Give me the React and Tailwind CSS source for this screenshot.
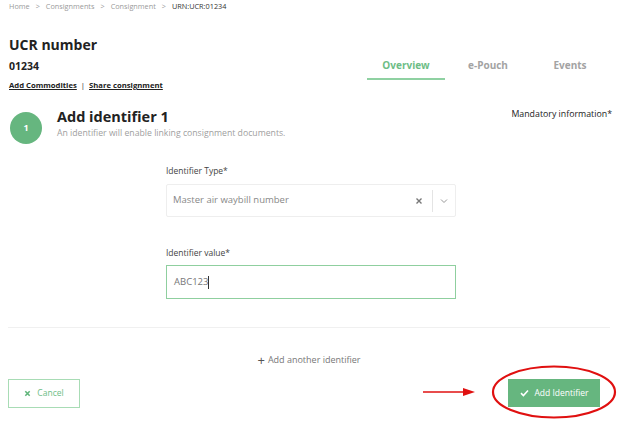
import React from "react";

export default function App() {
  return (
    <div className="relative w-[618px] h-[429px] overflow-hidden bg-white text-[#222] font-['Open_Sans','Noto_Sans',sans-serif]">
      {/* breadcrumb */}
      <div className="flex items-center gap-[6px] pl-[9px] pt-[1px] h-[11px] text-[7.3px] leading-[9px] text-[#9a9a9a]">
        <span>Home</span>
        <span>&gt;</span>
        <span>Consignments</span>
        <span>&gt;</span>
        <span>Consignment</span>
        <span>&gt;</span>
        <span className="text-[#333]">URN:UCR:01234</span>
      </div>

      {/* header */}
      <div className="flex justify-between pl-[9px] pr-[7px]">
        <div className="pt-[25px]">
          <div className="text-[14px] leading-[18px] font-bold">UCR number</div>
          <div className="mt-[5px] text-[10.5px] leading-[14px] font-bold">01234</div>
          <div className="mt-[7px] flex items-center gap-[4px] text-[7.7px] leading-[10px] font-bold">
            <span className="underline">Add Commodities</span>
            <span className="font-normal">|</span>
            <span className="underline">Share consignment</span>
          </div>
        </div>
        <div className="flex pt-[47px]">
          <div className="w-[82px] flex flex-col items-center">
            <span className="text-[10px] leading-[14px] font-bold text-[#6dbd86]">Overview</span>
            <span className="mt-[6px] h-[2px] w-[78px] bg-[#8fd1a2]"></span>
          </div>
          <div className="w-[82px] flex justify-center">
            <span className="text-[10px] leading-[14px] font-bold text-[#a3a3a3]">e-Pouch</span>
          </div>
          <div className="w-[82px] flex justify-center">
            <span className="text-[10px] leading-[14px] font-bold text-[#a3a3a3]">Events</span>
          </div>
        </div>
      </div>

      {/* step */}
      <div className="flex justify-between pl-[10px] pr-[6px] mt-[17px]">
        <div className="flex">
          <div className="mt-[5px] w-[32px] h-[32px] rounded-full bg-[#66b67f] flex items-center justify-center text-white text-[9px] font-bold">1</div>
          <div className="ml-[15px]">
            <div className="text-[14.5px] leading-[19px] font-bold text-[#222]">Add identifier 1</div>
            <div className="mt-[2px] text-[8.7px] leading-[11px] text-[#a0a0a0]">An identifier will enable linking consignment documents.</div>
          </div>
        </div>
        <div className="mt-[2px] text-[8.8px] leading-[11px] text-[#222]">Mandatory information*</div>
      </div>

      {/* form */}
      <div className="ml-[166px] w-[290px] mt-[21px]">
        <div className="text-[8.5px] leading-[11px] text-[#444]">Identifier Type*</div>
        <div className="mt-[8px] h-[33px] border border-[#eeeeee] rounded-[2px] flex items-center">
          <span className="flex-1 pl-[6px] text-[9.5px] text-[#888]">Master air waybill number</span>
          <svg width="8" height="8" viewBox="0 0 8 8" className="mr-[9px]">
            <path d="M1.5 1.5 L6.5 6.5 M6.5 1.5 L1.5 6.5" stroke="#777" strokeWidth="1.4" />
          </svg>
          <span className="w-px h-[22px] bg-[#e4e4e4]"></span>
          <svg width="8" height="6" viewBox="0 0 8 6" className="mx-[7px]">
            <path d="M1 1.5 L4 4.5 L7 1.5" stroke="#999" strokeWidth="1" fill="none" />
          </svg>
        </div>
        <div className="mt-[30px] text-[8.5px] leading-[11px] text-[#444]">Identifier value*</div>
        <div className="mt-[7px] h-[34px] border-[1.5px] border-[#8fcf9f] flex items-center pl-[7px] text-[9.5px] text-[#777]">
          ABC123<span className="w-px h-[13px] bg-[#333]"></span>
        </div>
      </div>

      {/* divider */}
      <div className="mx-[8px] mt-[28px] h-px bg-[#f0f0f0]"></div>

      <div className="mt-[26px] flex justify-center items-center text-[9px] leading-[12px] text-[#777]">
        <span className="text-[13px] leading-[12px] mr-[3px] text-[#555]">+</span>Add another identifier
      </div>

      {/* buttons */}
      <div className="mt-[13px] flex justify-between pl-[8px] pr-[18px]">
        <div className="w-[72px] h-[29px] border border-[#a8dcb5] flex items-center justify-center gap-[6px] text-[8.5px] text-[#6dbd86]">
          <svg width="7" height="7" viewBox="0 0 8 8">
            <path d="M1.5 1.5 L6.5 6.5 M6.5 1.5 L1.5 6.5" stroke="#5fb57a" strokeWidth="1.8" />
          </svg>
          Cancel
        </div>
        <div className="w-[92px] h-[28px] bg-[#66b67f] flex items-center justify-center gap-[6px] text-[8.5px] text-white">
          <svg width="9" height="8" viewBox="0 0 9 8">
            <path d="M1 4.2 L3.4 6.5 L8 1.5" stroke="white" strokeWidth="1.6" fill="none" />
          </svg>
          Add Identifier
        </div>
      </div>

      {/* annotation overlay */}
      <svg className="absolute left-0 top-0 pointer-events-none" width="618" height="429" viewBox="0 0 618 429">
        <line x1="423" y1="392" x2="466" y2="392" stroke="#e01010" strokeWidth="1.5" />
        <path d="M463 388 L475 392 L463 396 Z" fill="#e01010" />
        <ellipse cx="554" cy="392" rx="61" ry="25.5" fill="none" stroke="#e01010" strokeWidth="2.2" />
      </svg>
    </div>
  );
}
